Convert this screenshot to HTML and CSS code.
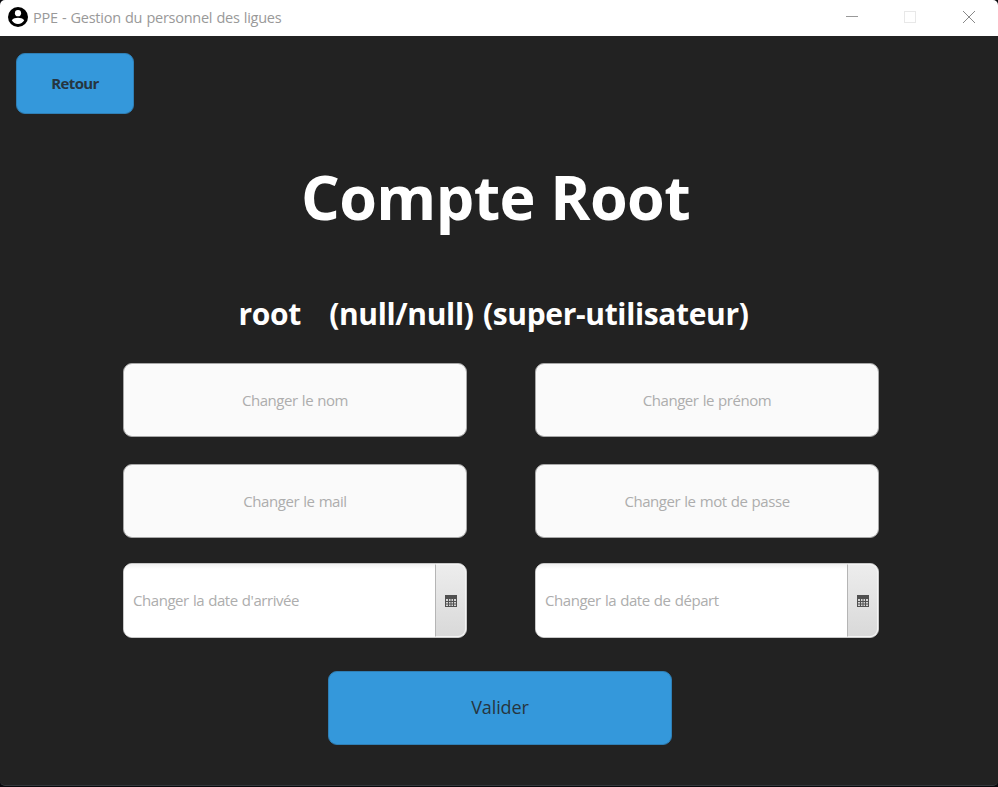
FILE: index.html
```html
<!DOCTYPE html>
<html lang="fr">
<head>
<meta charset="utf-8">
<title>PPE - Gestion du personnel des ligues</title>
<link rel="stylesheet" href="styles.css">
</head>
<body>
<div class="window">
  <header class="titlebar">
    <svg class="app-icon" viewBox="0 0 20 20"><circle cx="10" cy="10" r="10" fill="#000"/><circle cx="10" cy="6.200" r="3.100" fill="#fff"/><path d="M3.800 13.200C5.200 11.400 7.600 10.700 10 10.700s4.800.700 6.200 2.500C14.900 15.600 12.700 17 10 17s-4.900-1.400-6.200-3.800z" fill="#fff"/></svg>
    <span class="app-title">PPE - Gestion du personnel des ligues</span>
    <div class="controls">
      <svg viewBox="0 0 12 12"><path d="M0 5.500H12" stroke="#999"/></svg>
      <svg viewBox="0 0 12 12"><rect x=".5" y=".5" width="11" height="11" fill="none" stroke="#e8e8e8"/></svg>
      <svg viewBox="0 0 12 12"><path d="M0 0L12 12M12 0L0 12" stroke="#888"/></svg>
    </div>
  </header>
  <main class="content">
    <button class="back">Retour</button>
    <h1 class="title">Compte Root</h1>
    <h2 class="account">root&nbsp;&nbsp; (null/null) (super-utilisateur)</h2>
    <form class="form">
      <input class="field" placeholder="Changer le nom">
      <input class="field" placeholder="Changer le prénom">
      <input class="field" placeholder="Changer le mail">
      <input class="field" placeholder="Changer le mot de passe">
      <div class="date">
        <input class="date-input" placeholder="Changer la date d'arrivée">
        <div class="date-button"><svg class="calendar" viewBox="0 0 12 12"><path d="M0 0H12V12H0z" fill="#505050"/><path d="M1 4h2v2H1zM4 4h1.500v2H4zM6.500 4h1.500v2H6.500zM9 4h2v2H9zM1 7h2v1.500H1zM4 7h1.500v1.500H4zM6.500 7h1.500v1.500H6.500zM9 7h2v1.500H9zM1 9.500h2v1.500H1zM4 9.500h1.500v1.500H4zM6.500 9.500h1.500v1.500H6.500zM9 9.500h2v1.500H9z" fill="#d5d5d5"/></svg></div>
      </div>
      <div class="date">
        <input class="date-input" placeholder="Changer la date de départ">
        <div class="date-button"><svg class="calendar" viewBox="0 0 12 12"><path d="M0 0H12V12H0z" fill="#505050"/><path d="M1 4h2v2H1zM4 4h1.500v2H4zM6.500 4h1.500v2H6.500zM9 4h2v2H9zM1 7h2v1.500H1zM4 7h1.500v1.500H4zM6.500 7h1.500v1.500H6.500zM9 7h2v1.500H9zM1 9.500h2v1.500H1zM4 9.500h1.500v1.500H4zM6.500 9.500h1.500v1.500H6.500zM9 9.500h2v1.500H9z" fill="#d5d5d5"/></svg></div>
      </div>
    </form>
    <button class="submit">Valider</button>
  </main>
</div>
</body>
</html>
```
FILE: styles.css
```css
* { box-sizing: border-box; }
body { margin: 0; background: #000; font-family: "Open Sans", "Noto Sans", sans-serif; }
.window { height: 787px; display: flex; flex-direction: column; background: #08080c; overflow: hidden; }
.titlebar { height: 36px; flex: none; display: flex; align-items: center; padding: 0 23px 2px 8px; background: #fff; border-radius: 5px 5px 0 0; }
.app-icon { width: 20px; height: 20px; margin-right: 5px; }
.app-title { font-size: 14.5px; letter-spacing: -.26px; word-spacing: .7px; color: #999; white-space: nowrap; }
.controls { margin-left: auto; display: flex; gap: 46px; }
.controls svg { width: 12px; height: 12px; overflow: visible; }
.controls svg:nth-child(2) { margin-right: 1px; }
.content { height: 750px; display: flex; flex-direction: column; background: #222; border-bottom: 1px solid #34383c; border-radius: 0 0 5px 5px; }
button, input { font-family: inherit; margin: 0; outline: none; }
.back { width: 118px; height: 61px; flex: none; margin: 17px 0 0 16px; padding: 0 0 1px; border: 1px solid #2f7fb5; border-radius: 9px; background: #3498db; color: #263540; font-size: 15px; font-weight: 700; letter-spacing: -.6px; }
.title { margin: 41px 0 0; padding-right: 7px; height: 84px; line-height: 84px; font-size: 61px; letter-spacing: -.6px; color: #fff; text-align: center; white-space: nowrap; }
.account { margin: 53px 0 0; padding-right: 11px; height: 43px; line-height: 43px; font-size: 30px; letter-spacing: -.35px; word-spacing: 2px; color: #fff; text-align: center; white-space: nowrap; }
.form { display: grid; grid-template-columns: 344px 344px; grid-template-rows: 74px 74px 75px; column-gap: 68px; row-gap: 27px; margin: 28px 0 0 123px; height: 275px; }
.form .date { margin-top: -2px; }
.field { width: 344px; height: 74px; padding: 0 10px; border: 1px solid #a8a8a8; border-radius: 9px; background: #fafafa; text-align: center; font-size: 15px; letter-spacing: -.45px; word-spacing: .7px; }
.field::placeholder, .date-input::placeholder { color: #adadad; opacity: 1; }
.date { width: 344px; height: 75px; display: flex; border: 1px solid #c8c8c8; border-radius: 9px; background: #fff; overflow: hidden; }
.date-input { width: 311px; min-width: 0; border: 0; padding: 0 9px 2px; background: linear-gradient(#f1f1f1, #fff 5px); font-size: 15px; letter-spacing: -.45px; word-spacing: .7px; }
.date-button { flex: 1; display: flex; align-items: center; justify-content: center; border: 1px solid #f4f4f4; border-left: 1px solid #b5b5b5; border-radius: 0 8px 8px 0; background: linear-gradient(#ededed, #d9d9d9); }
.calendar { width: 12px; height: 12px; }
.submit { width: 344px; height: 74px; flex: none; margin: 33px 0 0 328px; padding: 0 0 2px; border: 1px solid #2f7fb5; border-radius: 9px; background: #3498db; color: #263540; font-size: 18px; letter-spacing: -.1px; }
```
